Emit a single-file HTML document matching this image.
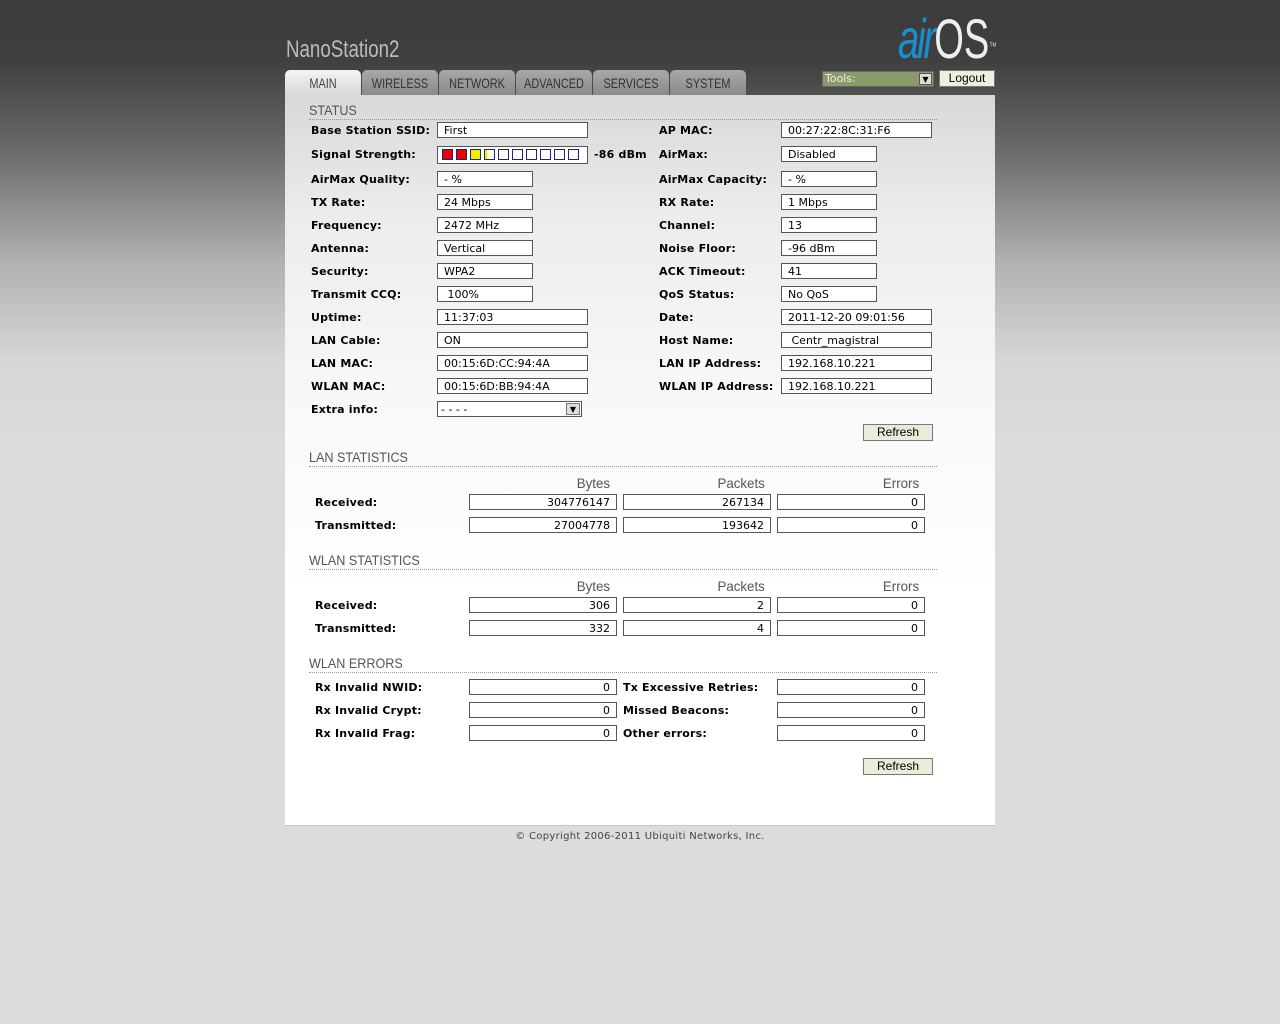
<!DOCTYPE html>
<html><head><meta charset="utf-8"><style>
*{margin:0;padding:0;box-sizing:border-box}
body{width:1280px;height:1024px;position:relative;overflow:hidden;font-family:"DejaVu Sans","Liberation Sans",sans-serif;font-size:11px;color:#000;
background:linear-gradient(#3b3b3b 0px,#3f3f3f 60px,#6a6a6a 150px,#b0b0b0 260px,#d6d6d6 360px,#dcdcdc 450px,#dcdcdc 1024px)}
.a{position:absolute}
.c{display:inline-block;transform:scaleX(0.78);transform-origin:0 0;white-space:nowrap}
.panel{left:285px;top:95px;width:710px;height:731px;background:linear-gradient(#d8d8d8 0px,#ececec 120px,#f8f8f8 300px,#fff 500px);border-bottom:1px solid #c8c8c8}
.lbl{position:absolute;font-weight:bold;font-size:11px;line-height:14px;letter-spacing:0.2px}
.in{position:absolute;height:16px;border:1px solid #555;background:#fff;font-size:11px;line-height:16px;padding-left:6px;white-space:nowrap;overflow:hidden}
.r{text-align:right;padding-right:6px;padding-left:0}
.sec{position:absolute;left:309px;width:628px;font-family:"Liberation Sans",sans-serif;font-size:14px;color:#555;border-bottom:1px dotted #999;line-height:17px}
.sec .c{transform:scaleX(0.9)}
.hd{position:absolute;font-family:"Liberation Sans",sans-serif;font-size:14px;color:#555;width:120px;height:16px}
.hd span{position:absolute;right:0;transform:scaleX(0.95);transform-origin:100% 0}
.btn{position:absolute;height:17px;width:70px;border:1px solid #777;background:#ecead8;font-family:"Liberation Sans",sans-serif;font-size:12px;text-align:center;line-height:15px}
.tab{position:absolute;top:70px;height:25px;width:76px;background:linear-gradient(#a8a8a8,#8a8a8a);border-radius:5px 5px 0 0;color:#333;font-family:"Liberation Sans",sans-serif;font-size:14px;line-height:26px;overflow:hidden}
.tab span{position:absolute;left:50%;transform:translateX(-50%) scaleX(0.78)}
.sq{display:inline-block;width:11px;height:11px;border:1px solid #22227a;margin-right:3px;vertical-align:top}
</style></head><body>
<div class="a" style="left:286px;top:36px;font-family:'Liberation Sans',sans-serif;font-size:24px;color:#bbb"><span class="c">NanoStation2</span></div>
<div class="a" style="left:898px;top:10px;font-family:'Liberation Sans',sans-serif;font-size:56px;line-height:58px"><span class="c" style="transform:scaleX(0.68)"><span style="color:#1a8fd0;font-style:italic;letter-spacing:-3px">air</span><span style="color:#eee">OS</span><span style="color:#ccc;font-size:11px;vertical-align:top;position:relative;top:8px">™</span></span></div>
<div class="tab" style="left:285px;background:linear-gradient(#f4f4f4,#d8d8d8);color:#444"><span>MAIN</span></div>
<div class="tab" style="left:362px"><span>WIRELESS</span></div>
<div class="tab" style="left:439px"><span>NETWORK</span></div>
<div class="tab" style="left:516px"><span>ADVANCED</span></div>
<div class="tab" style="left:593px"><span>SERVICES</span></div>
<div class="tab" style="left:670px"><span>SYSTEM</span></div>
<div class="a" style="left:822px;top:71px;width:112px;height:16px;background:#8a9a6a;border:1px solid #666;color:#eee;font-size:11px;padding-left:2px;line-height:14px">Tools:<span style="position:absolute;right:1px;top:1px;width:13px;height:12px;background:#ddd;border:1px solid #555;color:#000;font-size:8px;text-align:center;line-height:11px">▼</span></div>
<div class="btn" style="left:939px;top:70px;width:56px;height:17px;background:#f0eedc">Logout</div>
<div class="a panel"></div>
<div class="sec" style="top:102px"><span class="c">STATUS</span></div>

<div class="lbl" style="left:311px;top:124px">Base Station SSID:</div><div class="in" style="left:437px;top:122px;width:151px">First</div>
<div class="lbl" style="left:311px;top:148px">Signal Strength:</div>
<div class="in" style="left:437px;top:146px;width:151px;height:18px;padding:2px 0 0 4px"><span class="sq" style="background:#e00"></span><span class="sq" style="background:#e00"></span><span class="sq" style="background:#ee0"></span><span class="sq" style="background:linear-gradient(90deg,#ee0 30%,#fff 30%)"></span><span class="sq"></span><span class="sq"></span><span class="sq"></span><span class="sq"></span><span class="sq"></span><span class="sq"></span></div>
<div class="lbl" style="left:594px;top:148px">-86 dBm</div>
<div class="lbl" style="left:311px;top:173px">AirMax Quality:</div><div class="in" style="left:437px;top:171px;width:96px">- %</div>
<div class="lbl" style="left:311px;top:196px">TX Rate:</div><div class="in" style="left:437px;top:194px;width:96px">24 Mbps</div>
<div class="lbl" style="left:311px;top:219px">Frequency:</div><div class="in" style="left:437px;top:217px;width:96px">2472 MHz</div>
<div class="lbl" style="left:311px;top:242px">Antenna:</div><div class="in" style="left:437px;top:240px;width:96px">Vertical</div>
<div class="lbl" style="left:311px;top:265px">Security:</div><div class="in" style="left:437px;top:263px;width:96px">WPA2</div>
<div class="lbl" style="left:311px;top:288px">Transmit CCQ:</div><div class="in" style="left:437px;top:286px;width:96px">&nbsp;100%</div>
<div class="lbl" style="left:311px;top:311px">Uptime:</div><div class="in" style="left:437px;top:309px;width:151px">11:37:03</div>
<div class="lbl" style="left:311px;top:334px">LAN Cable:</div><div class="in" style="left:437px;top:332px;width:151px">ON</div>
<div class="lbl" style="left:311px;top:357px">LAN MAC:</div><div class="in" style="left:437px;top:355px;width:151px">00:15:6D:CC:94:4A</div>
<div class="lbl" style="left:311px;top:380px">WLAN MAC:</div><div class="in" style="left:437px;top:378px;width:151px">00:15:6D:BB:94:4A</div>
<div class="lbl" style="left:311px;top:403px">Extra info:</div>
<div class="in" style="left:437px;top:401px;width:145px;padding-left:3px">- - - -<span style="position:absolute;right:1px;top:1px;width:14px;height:12px;background:#ddd;border:1px solid #777;font-size:8px;text-align:center;line-height:11px">▼</span></div>

<div class="lbl" style="left:659px;top:124px">AP MAC:</div><div class="in" style="left:781px;top:122px;width:151px">00:27:22:8C:31:F6</div>
<div class="lbl" style="left:659px;top:148px">AirMax:</div><div class="in" style="left:781px;top:146px;width:96px">Disabled</div>
<div class="lbl" style="left:659px;top:173px">AirMax Capacity:</div><div class="in" style="left:781px;top:171px;width:96px">- %</div>
<div class="lbl" style="left:659px;top:196px">RX Rate:</div><div class="in" style="left:781px;top:194px;width:96px">1 Mbps</div>
<div class="lbl" style="left:659px;top:219px">Channel:</div><div class="in" style="left:781px;top:217px;width:96px">13</div>
<div class="lbl" style="left:659px;top:242px">Noise Floor:</div><div class="in" style="left:781px;top:240px;width:96px">-96 dBm</div>
<div class="lbl" style="left:659px;top:265px">ACK Timeout:</div><div class="in" style="left:781px;top:263px;width:96px">41</div>
<div class="lbl" style="left:659px;top:288px">QoS Status:</div><div class="in" style="left:781px;top:286px;width:96px">No QoS</div>
<div class="lbl" style="left:659px;top:311px">Date:</div><div class="in" style="left:781px;top:309px;width:151px">2011-12-20 09:01:56</div>
<div class="lbl" style="left:659px;top:334px">Host Name:</div><div class="in" style="left:781px;top:332px;width:151px">&nbsp;Centr_magistral</div>
<div class="lbl" style="left:659px;top:357px">LAN IP Address:</div><div class="in" style="left:781px;top:355px;width:151px">192.168.10.221</div>
<div class="lbl" style="left:659px;top:380px">WLAN IP Address:</div><div class="in" style="left:781px;top:378px;width:151px">192.168.10.221</div>
<div class="btn" style="left:863px;top:424px">Refresh</div>

<div class="sec" style="top:449px"><span class="c">LAN STATISTICS</span></div>
<div class="hd" style="left:490px;top:475px"><span>Bytes</span></div><div class="hd" style="left:645px;top:475px"><span>Packets</span></div><div class="hd" style="left:799px;top:475px"><span>Errors</span></div>
<div class="lbl" style="left:315px;top:496px">Received:</div>
<div class="in r" style="left:469px;top:494px;width:148px">304776147</div><div class="in r" style="left:623px;top:494px;width:148px">267134</div><div class="in r" style="left:777px;top:494px;width:148px">0</div>
<div class="lbl" style="left:315px;top:519px">Transmitted:</div>
<div class="in r" style="left:469px;top:517px;width:148px">27004778</div><div class="in r" style="left:623px;top:517px;width:148px">193642</div><div class="in r" style="left:777px;top:517px;width:148px">0</div>

<div class="sec" style="top:552px"><span class="c">WLAN STATISTICS</span></div>
<div class="hd" style="left:490px;top:578px"><span>Bytes</span></div><div class="hd" style="left:645px;top:578px"><span>Packets</span></div><div class="hd" style="left:799px;top:578px"><span>Errors</span></div>
<div class="lbl" style="left:315px;top:599px">Received:</div>
<div class="in r" style="left:469px;top:597px;width:148px">306</div><div class="in r" style="left:623px;top:597px;width:148px">2</div><div class="in r" style="left:777px;top:597px;width:148px">0</div>
<div class="lbl" style="left:315px;top:622px">Transmitted:</div>
<div class="in r" style="left:469px;top:620px;width:148px">332</div><div class="in r" style="left:623px;top:620px;width:148px">4</div><div class="in r" style="left:777px;top:620px;width:148px">0</div>

<div class="sec" style="top:655px"><span class="c">WLAN ERRORS</span></div>
<div class="lbl" style="left:315px;top:681px">Rx Invalid NWID:</div><div class="in r" style="left:469px;top:679px;width:148px">0</div>
<div class="lbl" style="left:623px;top:681px">Tx Excessive Retries:</div><div class="in r" style="left:777px;top:679px;width:148px">0</div>
<div class="lbl" style="left:315px;top:704px">Rx Invalid Crypt:</div><div class="in r" style="left:469px;top:702px;width:148px">0</div>
<div class="lbl" style="left:623px;top:704px">Missed Beacons:</div><div class="in r" style="left:777px;top:702px;width:148px">0</div>
<div class="lbl" style="left:315px;top:727px">Rx Invalid Frag:</div><div class="in r" style="left:469px;top:725px;width:148px">0</div>
<div class="lbl" style="left:623px;top:727px">Other errors:</div><div class="in r" style="left:777px;top:725px;width:148px">0</div>
<div class="btn" style="left:863px;top:758px">Refresh</div>

<div class="a" style="left:285px;top:831px;width:710px;text-align:center;font-size:10px;color:#444;letter-spacing:0.3px">© Copyright 2006-2011 Ubiquiti Networks, Inc.</div>
</body></html>
